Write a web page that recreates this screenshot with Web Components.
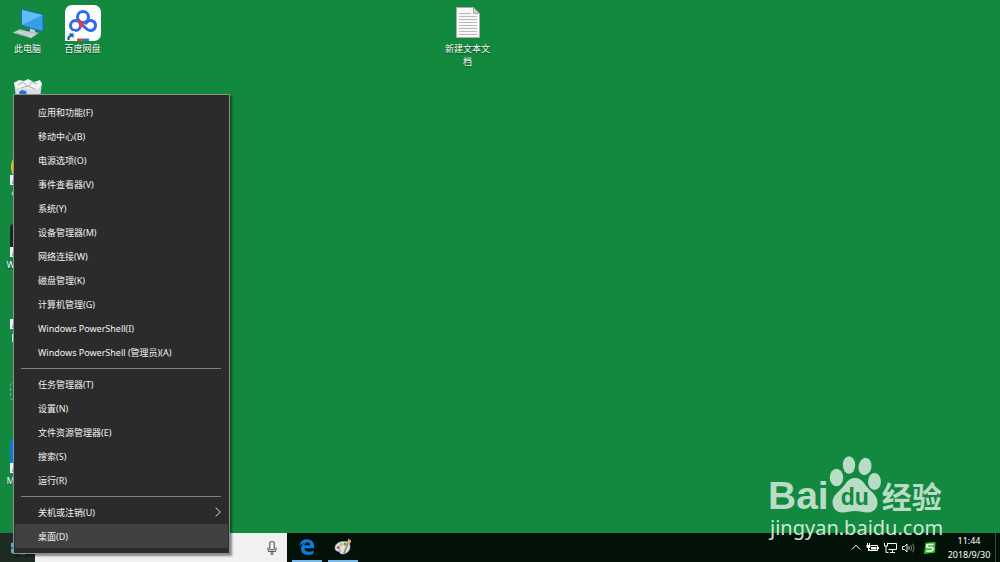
<!DOCTYPE html>
<html lang="zh-CN">
<head>
<meta charset="utf-8">
<title>桌面</title>
<style>
html,body{margin:0;height:100%}
body{font-family:"Noto Sans","Noto Sans CJK SC",sans-serif;font-size:9px;color:#fff;background:#12893f;overflow:hidden}
</style>
</head>
<body>
<desk-top></desk-top>
<script>
function define(name, html, setup) {
  const tpl = document.createElement('template');
  tpl.innerHTML = html;
  customElements.define(name, class extends HTMLElement {
    constructor() {
      super();
      this.attachShadow({mode: 'open'}).append(tpl.content.cloneNode(true));
    }
    connectedCallback() { if (setup) setup(this, this.shadowRoot); }
  });
}

define('desk-icon', `
<style>
:host{display:flex;flex-direction:column;align-items:center;gap:1px}
.art{position:relative;width:36px;height:36px}
.badge{position:absolute;left:0;bottom:0;display:none;width:10px;height:10px}
:host([shortcut]) .badge{display:block}
.label{width:48px;line-height:13px;text-align:center;text-shadow:0 1px 1px #053d18}
:host([start]) .label{text-align:left;width:42px}
</style>
<div class="art"><slot name="art"></slot>
<svg class="badge" viewBox="0 0 10 10"><path d="M0 0h10v10H0z" fill="#eef3f6"/><path d="M2.500 9C2 6 3 4.500 5 4.200L4 2.500h4.500V7L7 5.600C5 6 4.500 7 4.500 9z" fill="#1f5f9e"/></svg></div>
<div class="label"><slot></slot></div>`);

define('menu-item', `
<style>
:host{display:block}
button{display:flex;align-items:center;justify-content:space-between;width:100%;height:24px;padding:0 7px 0 23px;border:0;background:none;color:#f2f2f2;font:inherit;text-align:left;white-space:nowrap}
:host([active]) button{background:#414141}
svg{display:none;width:6px;height:10px}
:host([sub]) svg{display:block}
</style>
<button type="button" role="menuitem"><span><slot></slot></span><svg viewBox="0 0 6 10"><path d="M.6.5 5.300 5 .6 9.500" fill="none" stroke="#ddd"/></svg></button>`);

define('menu-line', `
<style>:host{display:block;height:1px;margin:4px 7px 3px 6px;background:#808080}</style>`);

define('power-menu', `
<style>
:host{display:block;box-sizing:border-box;width:217px;padding:5px 1px;background:#2b2b2b;border:1px solid #8d918e;box-shadow:2px 2px 2px rgba(0,0,0,.45)}
</style>
<div role="menu"><slot></slot></div>`);

define('task-app', `
<style>
:host{display:block;width:30px;height:29px}
button{display:flex;justify-content:center;align-items:center;width:100%;height:100%;padding:0;border:0;border-bottom:2px solid #76b9ed;background:none}
</style>
<button type="button"><slot></slot></button>`, (el, root) => {
  root.querySelector('button').setAttribute('aria-label', el.getAttribute('name'));
});

define('task-bar', `
<style>
:host{display:flex;height:29px;background:#031208}
button{padding:0;border:0;background:none;display:flex;align-items:center;justify-content:center;color:inherit}
.start{width:35px;background:#1d2b23}
.search{display:flex;align-items:center;box-sizing:border-box;width:252px;padding:0 9px;background:#f1f1f1}
input{flex:1;min-width:0;border:0;padding:0 6px;background:none;font:inherit;outline:0}
.apps{display:flex;gap:6px;padding-left:5px;flex:1}
.tray{display:flex;align-items:center;gap:5px;padding-right:1px}
.ime{margin-left:4px}
.clock{width:50px;margin-left:3px;line-height:14px;text-align:center;white-space:nowrap}
.peek{width:4px;border-left:1px solid #3d4740}
</style>
<button class="start" aria-label="开始"><svg width="14" height="14" viewBox="0 0 14 14" fill="#58a6dc"><path d="M0 2 6 1v5.500H0zM7 .9 14 0v6.500H7zM0 7.500h6V13l-6-1zM7 7.500h7V14l-7-1z"/></svg></button>
<div class="search">
<svg width="11" height="14" viewBox="0 0 11 14" fill="none" stroke="#777" stroke-width="1.300"><circle cx="6" cy="5" r="4"/><path d="M3.500 8.500 0 13"/></svg>
<input type="text" aria-label="搜索">
<button aria-label="语音"><svg width="12" height="14" viewBox="0 0 12 14" fill="none" stroke="#555" stroke-width="1.100"><rect x="3.800" y=".8" width="4.400" height="8" rx="1"/><path d="M2 6.500v2.300c0 1 .8 1.800 1.800 1.800h4.400c1 0 1.800-.8 1.800-1.800V6.500M6 10.600V13M4.500 13.200h3"/></svg></button>
</div>
<div class="apps">
<task-app name="Edge"><svg width="16" height="16" viewBox="0 0 16 16"><path d="M.5 7C1 2.800 4 .2 8.100.2c4.300 0 7.100 3 7.100 6.800v2.200H5.300c.2 2.300 2 3.500 4.500 3.500 1.600 0 3.100-.4 4.500-1.300v3.300c-1.500.8-3.300 1.200-5.300 1.200-4.200 0-7-2.300-7-6.200 0-2.700 1.500-4.800 3.800-5.900C3.400 4.500 1.600 5.500.5 7zm4.900-.8h5.700c0-2-.9-3-2.700-3-1.700 0-2.700 1.200-3 3z" fill="#0b7ce0"/></svg></task-app>
<task-app name="画图"><svg width="18" height="17" viewBox="0 0 18 17"><path d="M1 10C1 6 5 3.500 10 3.500c4 0 6 2 6 5 0 5-4 7.500-8 7.500-2 0-2-2-3.500-2.500C2.500 13 1 12.500 1 10z" fill="#d3e5f2" stroke="#93b8d3" stroke-width=".6"/><circle cx="4.300" cy="9.500" r="1.500" fill="#db463a"/><circle cx="7" cy="6.600" r="1.500" fill="#e7b527"/><circle cx="11" cy="6" r="1.500" fill="#54aa43"/><circle cx="6" cy="12.500" r="1.300" fill="#8fb9da"/><path d="M10 15.500 14 5" stroke="#c77a37" stroke-width="1.800"/><path d="M12.800 5c.2-2 1.500-2.200 1.500-4.500L17 2.500c.5 2-1 2.700-2 3.700z" fill="#e3ad70"/></svg></task-app>
</div>
<div class="tray">
<button aria-label="显示隐藏的图标"><svg width="10" height="7" viewBox="0 0 10 7" fill="none" stroke="#fff"><path d="M.8 5.500 5 1.300l4.200 4.200"/></svg></button>
<button aria-label="电池"><svg width="13" height="9" viewBox="0 0 13 9"><path d="M5 2.500h6.500v5H3.500V6" fill="none" stroke="#fff"/><path d="M5 4h5.500v2.500H5zM12 4h1v2h-1zM1 0h1v2H1zM3 0h1v2H3z" fill="#fff"/><path d="M.5 2h4v1.500c0 1-.8 1.500-2 1.500s-2-.5-2-1.500zM2 5h1v3H2z" fill="#fff"/></svg></button>
<button aria-label="网络"><svg width="13" height="11" viewBox="0 0 13 11" fill="none" stroke="#fff"><path d="M4 1.500h8.500v6H4.500M8.500 8v2M6 10.500h5M.5 1v3h3V1M2 4v6.500h2.500"/></svg></button>
<button aria-label="音量"><svg width="13" height="10" viewBox="0 0 13 10" fill="none" stroke="#fff" stroke-width=".9"><path d="M.5 3.500h2L5 1v8L2.500 6.500h-2zM6.800 3.500q1 1.500 0 3"/><path d="M8.700 2q2 3 0 6M10.700.7q3 4.300 0 8.600" stroke="#858c87"/></svg></button>
<button class="ime" aria-label="搜狗输入法"><svg width="12" height="12" viewBox="0 0 12 12"><path d="M1.500.8 11.500 0 11 10.500 0 12z" fill="#31c52b"/><path d="M9.500 2.500H5C2 2.500 2.300 5.500 4.500 5.500h3C9.700 5.500 9.300 9 7 9H2.300" fill="none" stroke="#fff" stroke-width="1.700"/></svg></button>
<div class="clock"><div>11:44</div><div>2018/9/30</div></div>
</div>
<div class="peek"></div>`);

define('brand-mark', `
<style>
:host{display:block;width:180px;color:#b8dcc5}
.row{display:flex;align-items:flex-end}
.bai{font:bold 39px/34px "Liberation Sans",sans-serif}
.paw{position:relative;width:52px;height:57px}
.paw svg{display:block}
.du{position:absolute;left:0;right:0;bottom:4px;text-align:center;font:bold 23px/24px "Liberation Sans",sans-serif;color:#12893f}
.jy{font:bold 30px/30px "Noto Sans CJK SC",sans-serif;padding:0 0 3px 1px}
.url{font:20px/30px "Noto Sans",sans-serif;color:#cfe7d6;padding-left:2px}
</style>
<div class="row"><span class="bai">Bai</span>
<div class="paw"><svg width="52" height="57" viewBox="0 0 52 57" fill="#b8dcc5"><ellipse cx="7.500" cy="21.500" rx="6.700" ry="8.800"/><ellipse cx="20" cy="9" rx="6.200" ry="8.700"/><ellipse cx="36" cy="10.500" rx="6.500" ry="8.700" transform="rotate(10 36 10.500)"/><ellipse cx="45.500" cy="25.500" rx="6.500" ry="8.500"/><path d="M26 22c8 0 10 8 15 12 5 4.500 7.500 8 7.500 12.500 0 6.500-4.500 10-10 10-4.500 0-8-1.500-12.500-1.500s-8 1.500-12.500 1.500c-5.500 0-10-3.500-10-10C3.500 42 6 38.500 11 34c5-4 7-12 15-12z"/></svg><span class="du">du</span></div>
<span class="jy">经验</span></div>
<div class="url">jingyan.baidu.com</div>`);

define('desk-top', `
<style>
:host{display:flex;flex-direction:column;height:100vh;position:relative}
main{flex:1;min-height:0;display:grid;grid-template-columns:repeat(auto-fill,55px);grid-template-rows:repeat(7,72px);padding-top:5px;overflow:hidden}
svg{display:block}
.doc{grid-column:9;grid-row:1}
.c{grid-column:1}
power-menu{position:absolute;left:13px;bottom:8px}
brand-mark{position:absolute;right:52px;bottom:19px}
</style>
<main>
<desk-icon class="c" style="grid-row:1"><svg slot="art" width="36" height="36" viewBox="0 0 36 36"><path d="M11 3.500 33.500 9v18.500L11 21z" fill="#1d6ca8"/><path d="M12 5 32.500 10v16L12 20z" fill="#35a0e8"/><path d="M12 5 32.500 10 12 20z" fill="#63bdf5"/><path d="M20 23.500v3l-4 1 7 2.500 6-2-4-1v-2z" fill="#c2cdd4"/><path d="M3 27.500 10 24.500 27 29 21 33z" fill="#d9dfe3" stroke="#98a6ad" stroke-width=".6"/><path d="m6 27.500 14 3.800M9 26l14 3.800" stroke="#9daab1" stroke-width=".7"/></svg>此电脑</desk-icon>
<desk-icon shortcut style="grid-column:2;grid-row:1"><svg slot="art" width="36" height="36" viewBox="0 0 36 36"><rect width="36" height="36" rx="7" fill="#fff"/><g fill="none" stroke="#2d6cf0" stroke-width="3" stroke-linecap="round"><circle cx="18" cy="12" r="5.500"/><circle cx="10.500" cy="20.500" r="5"/><path d="M15 17.500 21 23.500c1.500 1.500 3 2 4.500 2a5 5 0 1 0-4.500-7.300"/></g><path d="m13.500 15 4 4.500-3 3" fill="none" stroke="#e83d3d" stroke-width="2.800"/><path d="M12 33.500h6V36h-6z" fill="#e83d3d"/><path d="M18 33.500h6V36h-6z" fill="#2d6cf0"/></svg>百度网盘</desk-icon>
<desk-icon class="doc"><svg slot="art" width="36" height="36" viewBox="0 0 36 36"><path d="M6.500 2.500h17l6 6v24h-23z" fill="#f7f7f7" stroke="#a9b0ab"/><path d="M23.500 2.500v6h6z" fill="#ccd0cd" stroke="#a9b0ab"/><path d="M9 8.500h12M9 11.500h18M9 14.500h18M9 17.500h18M9 20.500h18M9 23.500h18M9 26.500h18M9 29.500h18" stroke="#b8bbb9"/></svg>新建文本文档</desk-icon>
<desk-icon class="c" style="grid-row:2"><svg slot="art" width="36" height="36" viewBox="0 0 36 36"><path d="m4 5 28 1-4 29H8z" fill="#d7dde0"/><path d="m4 6 5-3 5 1 4-2 6 3 6-2 2 4-4 5-22-1z" fill="#f2f4f5"/><path d="m8 8 5-3 5 5 4-5 5 2M11 11l7-2 7 3" fill="none" stroke="#a7b1b8"/><path d="m9 15 3-2 4 1 1 4h-7z" fill="#1877cf"/></svg></desk-icon>
<desk-icon class="c" style="grid-row:3" shortcut><svg slot="art" width="36" height="36" viewBox="0 0 36 36" overflow="visible"><circle cx="18" cy="18" r="17" fill="#e8bd16"/><path d="M3.500 42q-3 2.500 0 5" fill="none" stroke="#c3eee5"/></svg></desk-icon>
<desk-icon class="c" style="grid-row:4" shortcut start><svg slot="art" width="36" height="36" viewBox="0 0 36 36"><rect y="3" width="36" height="33" rx="4" fill="#202322"/></svg>W</desk-icon>
<desk-icon class="c" style="grid-row:5" shortcut><svg slot="art" width="36" height="36" viewBox="0 0 36 36" overflow="visible"><path d="M2.500 41v8" stroke="#c3e6dc"/></svg></desk-icon>
<desk-icon class="c" style="grid-row:6"><svg slot="art" width="36" height="36" viewBox="0 0 36 36"><rect x=".500" y="17.500" width="30" height="17" rx="2" fill="none" stroke="#7fae8c" stroke-dasharray="3 2"/></svg></desk-icon>
<desk-icon class="c" style="grid-row:7" shortcut start><svg slot="art" width="36" height="36" viewBox="0 0 36 36"><path d="M0 3h36v33H0z" fill="#0b78e3"/></svg>M</desk-icon>
</main>
<task-bar></task-bar>
<power-menu>
<menu-item>应用和功能(F)</menu-item>
<menu-item>移动中心(B)</menu-item>
<menu-item>电源选项(O)</menu-item>
<menu-item>事件查看器(V)</menu-item>
<menu-item>系统(Y)</menu-item>
<menu-item>设备管理器(M)</menu-item>
<menu-item>网络连接(W)</menu-item>
<menu-item>磁盘管理(K)</menu-item>
<menu-item>计算机管理(G)</menu-item>
<menu-item>Windows PowerShell(I)</menu-item>
<menu-item>Windows PowerShell (管理员)(A)</menu-item>
<menu-line></menu-line>
<menu-item>任务管理器(T)</menu-item>
<menu-item>设置(N)</menu-item>
<menu-item>文件资源管理器(E)</menu-item>
<menu-item>搜索(S)</menu-item>
<menu-item>运行(R)</menu-item>
<menu-line></menu-line>
<menu-item sub>关机或注销(U)</menu-item>
<menu-item active>桌面(D)</menu-item>
</power-menu>
<brand-mark></brand-mark>`);
</script>
</body>
</html>
